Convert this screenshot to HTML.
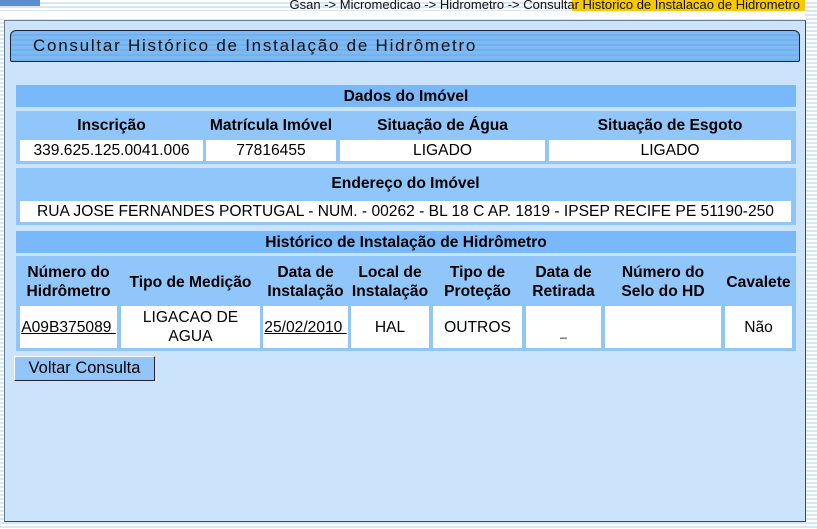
<!DOCTYPE html>
<html><head><meta charset="utf-8"><style>
*{margin:0;padding:0;box-sizing:border-box}
body{width:817px;height:529px;overflow:hidden;position:relative;font-family:"Liberation Sans",Arial,sans-serif;font-size:15.6px;color:#000;
background:repeating-linear-gradient(#fff 0,#fff 2px,#d6e8f7 2px,#d6e8f7 4px);}
.a{position:absolute}
.c{position:absolute;display:flex;align-items:center;justify-content:center;text-align:center;line-height:19px;white-space:nowrap}
.w{background:#fff}
.b{font-weight:bold}
u{text-decoration:underline}
</style></head><body>
<div class="a" style="left:0;top:0;width:40px;height:6px;background:#5d8fd0"></div>
<div class="a" style="left:572px;top:0;width:233px;height:11px;background:#f8c800"></div>
<div class="a" style="left:200px;top:-3px;width:600px;text-align:right;font-size:13px;line-height:15px;color:#111">Gsan -&gt; Micromedicao -&gt; Hidrometro -&gt; Consultar Historico de Instalacao de Hidrometro</div>
<div class="a" style="left:0;top:11px;width:805px;height:8px;background:#fff"></div>
<div class="a" style="left:4px;top:20px;width:802px;height:502px;background:#cbe3fb;border:1px solid #6a7f96;border-right-color:#3a4a5a;border-bottom-color:#3a4a5a"></div>
<div class="a" style="left:10px;top:30px;width:790px;height:32px;background:repeating-linear-gradient(#7db9f3 0,#7db9f3 3px,#73b0ee 3px,#73b0ee 5px);border:1px solid #223;border-radius:6px 6px 2px 2px;"></div>
<div class="a" style="left:33px;top:36px;font-size:17px;letter-spacing:1.75px;color:#111">Consultar Histórico de Instalação de Hidrômetro</div>

<div class="c b" style="left:16px;top:85px;width:780px;height:22px;background:#79b9fb">Dados do Imóvel</div>
<div class="a" style="left:16px;top:111px;width:780px;height:53px;background:#91c6fb"></div>
<div class="c b" style="left:20px;top:114px;width:183px;height:22px">Inscrição</div>
<div class="c b" style="left:206px;top:114px;width:130px;height:22px">Matrícula Imóvel</div>
<div class="c b" style="left:340px;top:114px;width:205px;height:22px">Situação de Água</div>
<div class="c b" style="left:549px;top:114px;width:242px;height:22px">Situação de Esgoto</div>
<div class="c w" style="left:20px;top:140px;width:183px;height:21px">339.625.125.0041.006</div>
<div class="c w" style="left:206px;top:140px;width:130px;height:21px">77816455</div>
<div class="c w" style="left:340px;top:140px;width:205px;height:21px">LIGADO</div>
<div class="c w" style="left:549px;top:140px;width:242px;height:21px">LIGADO</div>

<div class="a" style="left:16px;top:168px;width:780px;height:57px;background:#91c6fb"></div>
<div class="c b" style="left:20px;top:171px;width:771px;height:25px">Endereço do Imóvel</div>
<div class="c w" style="left:20px;top:201px;width:771px;height:21px">RUA JOSE FERNANDES PORTUGAL - NUM. - 00262 - BL 18 C AP. 1819 - IPSEP RECIFE PE 51190-250</div>

<div class="c b" style="left:16px;top:231px;width:780px;height:22px;background:#79b9fb">Histórico de Instalação de Hidrômetro</div>
<div class="a" style="left:16px;top:256px;width:780px;height:95px;background:#91c6fb"></div>
<div class="c b" style="left:20px;top:259px;width:97px;height:46px">Número do<br>Hidrômetro</div>
<div class="c b" style="left:121px;top:259px;width:139px;height:46px">Tipo de Medição</div>
<div class="c b" style="left:263px;top:259px;width:85px;height:46px">Data de<br>Instalação</div>
<div class="c b" style="left:351px;top:259px;width:78px;height:46px">Local de<br>Instalação</div>
<div class="c b" style="left:433px;top:259px;width:89px;height:46px">Tipo de<br>Proteção</div>
<div class="c b" style="left:526px;top:259px;width:75px;height:46px">Data de<br>Retirada</div>
<div class="c b" style="left:605px;top:259px;width:116px;height:46px">Número do<br>Selo do HD</div>
<div class="c b" style="left:725px;top:259px;width:67px;height:46px">Cavalete</div>
<div class="c w" style="left:20px;top:306px;width:97px;height:42px"><u>A09B375089&nbsp;</u></div>
<div class="c w" style="left:121px;top:306px;width:139px;height:42px">LIGACAO DE<br>AGUA</div>
<div class="c w" style="left:263px;top:306px;width:85px;height:42px"><u>25/02/2010&nbsp;</u></div>
<div class="c w" style="left:351px;top:306px;width:78px;height:42px">HAL</div>
<div class="c w" style="left:433px;top:306px;width:89px;height:42px">OUTROS</div>
<div class="c w" style="left:526px;top:306px;width:75px;height:42px"><span style="margin-top:10px;font-size:12px">_</span></div>
<div class="c w" style="left:605px;top:306px;width:116px;height:42px"></div>
<div class="c w" style="left:725px;top:306px;width:67px;height:42px">Não</div>

<div class="c" style="left:14px;top:356px;width:141px;height:25px;background:#92c6fb;border:1px solid #fff;border-right-color:#223;border-bottom-color:#223;font-size:16.5px">Voltar Consulta</div>
</body></html>
